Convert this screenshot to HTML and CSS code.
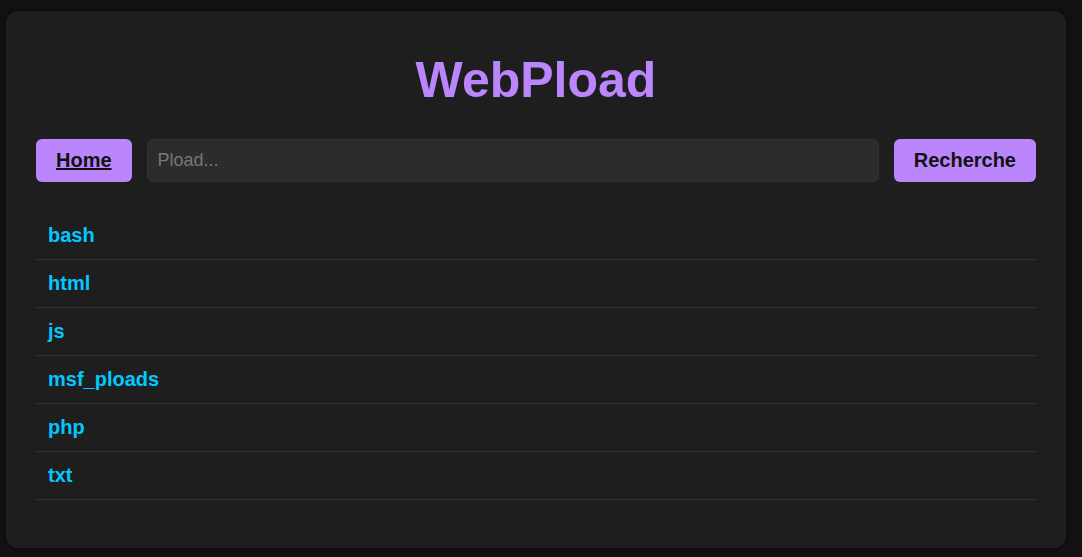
FILE: index.html
```html
<!DOCTYPE html>
<html lang="fr">
<head>
<meta charset="utf-8">
<title>WebPload</title>
<link rel="stylesheet" href="styles.css">
</head>
<body>
<div class="container">
  <h1 class="title">WebPload</h1>
  <form class="nav">
    <a class="btn home" href="#">Home</a>
    <input class="search" type="text" placeholder="Pload...">
    <button class="btn" type="button">Recherche</button>
  </form>
  <ul class="list">
    <li><a href="#">bash</a></li>
    <li><a href="#">html</a></li>
    <li><a href="#">js</a></li>
    <li><a href="#">msf_ploads</a></li>
    <li><a href="#">php</a></li>
    <li><a href="#">txt</a></li>
  </ul>
</div>
</body>
</html>
```
FILE: styles.css
```css
html, body {
  margin: 0;
  padding: 0;
  background: #121212;
  font-family: "Liberation Sans", Arial, sans-serif;
  height: 557px;
  overflow: hidden;
}
body {
  padding: 11px 0 0 6px;
  box-sizing: border-box;
}
.container {
  box-sizing: border-box;
  width: 1060px;
  height: 537px;
  padding: 30px;
  background: #1e1e1e;
  border-radius: 12px;
  box-shadow: 0 0 10px rgba(0,0,0,0.5);
}
.title {
  margin: 10px 0 30px;
  text-align: center;
  font-size: 50px;
  line-height: 58px;
  font-weight: bold;
  color: #bb86fc;
}
.nav {
  display: flex;
  gap: 15px;
  margin: 0;
}
.btn {
  display: block;
  background: #bb86fc;
  color: #121212;
  font-family: inherit;
  font-weight: bold;
  font-size: 20px;
  line-height: 23px;
  padding: 10px 20px;
  border: none;
  border-radius: 6px;
  cursor: pointer;
}
.home {
  text-decoration: underline;
}
.search {
  flex: 1;
  min-width: 0;
  background: #2c2c2c;
  border: 1px solid #333;
  border-radius: 6px;
  color: #e0e0e0;
  font-family: inherit;
  font-size: 18px;
  padding: 0 10px;
  outline: none;
}
.search::placeholder {
  color: #777;
}
.list {
  list-style: none;
  margin: 30px 0 0;
  padding: 0;
}
.list li {
  border-bottom: 1px solid #333;
  padding: 12px;
  font-size: 20px;
  line-height: 23px;
}
.list a {
  display: block;
  color: #03c8ff;
  font-weight: bold;
  text-decoration: none;
}
```
